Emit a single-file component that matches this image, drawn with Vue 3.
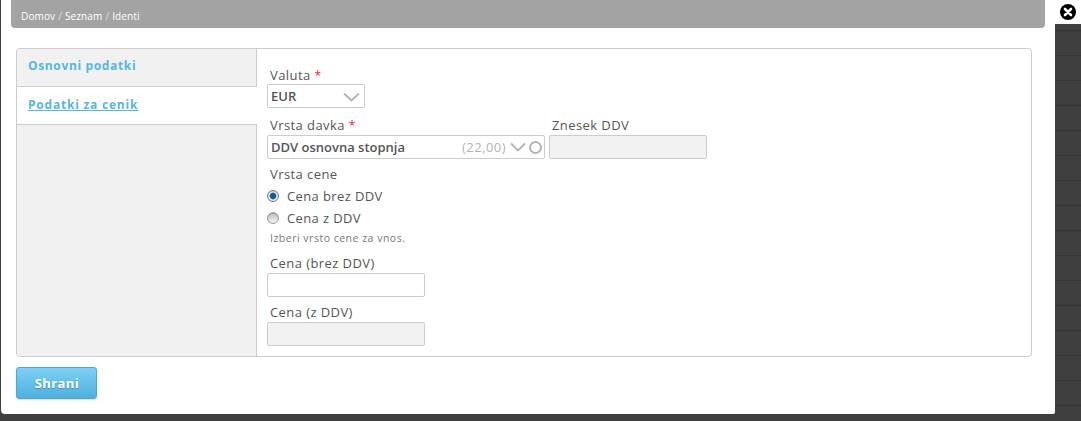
<script setup>
const breadcrumbs = ['Domov', 'Seznam', 'Identi']
const rows = [0, 1, 2, 3, 4, 5, 6, 7, 8, 9, 10, 11, 12, 13, 14, 15]
</script>

<template>
  <div class="page">
    <div class="backdrop-rows">
      <div v-for="r in rows" :key="r" class="backdrop-row"></div>
    </div>
    <div class="modal">
      <div class="crumbs">
        <template v-for="(c, i) in breadcrumbs" :key="c">
          <span v-if="i" class="crumb-sep">/</span>
          <span>{{ c }}</span>
        </template>
      </div>

      <div class="panel">
        <div class="tabs">
          <div class="tab">Osnovni podatki</div>
          <div class="tab active"><a>Podatki za cenik</a></div>
          <div class="tab-rest"></div>
        </div>

        <div class="fields">
          <label class="lbl lbl-first">Valuta <i>*</i></label>
          <div class="select select-cur">
            <b>EUR</b>
            <svg class="chev" width="17" height="10" viewBox="0 0 17 10"><path d="M1 1.5l7.5 7 7.5-7" /></svg>
          </div>

          <div class="row">
            <div>
              <label class="lbl lbl-up">Vrsta davka <i>*</i></label>
              <div class="select select-tax">
                <b>DDV osnovna stopnja</b>
                <span class="rate">(22,00)</span>
                <svg class="chev chev-tax" width="16" height="10" viewBox="0 0 16 10"><path d="M1 1.5l7 7 7-7" /></svg>
                <span class="ring"></span>
              </div>
            </div>
            <div class="amount">
              <label class="lbl lbl-up">Znesek DDV</label>
              <div class="input disabled"></div>
            </div>
          </div>

          <label class="lbl lbl-type">Vrsta cene</label>
          <div class="radio radio-first"><span class="dot on"></span>Cena brez DDV</div>
          <div class="radio"><span class="dot"></span>Cena z DDV</div>
          <div class="hint">Izberi vrsto cene za vnos.</div>

          <label class="lbl lbl-up lbl-price">Cena (brez DDV)</label>
          <div class="input"></div>
          <label class="lbl lbl-up lbl-gross">Cena (z DDV)</label>
          <div class="input disabled"></div>
        </div>
      </div>

      <button class="save">Shrani</button>
    </div>

    <div class="close">
      <svg width="16" height="16" viewBox="0 0 16 16"><path d="M5 5l6 6M11 5l-6 6" /></svg>
    </div>
  </div>
</template>

<style>
body {
  margin: 0;
  background: #3f3f3f;
}
</style>

<style scoped>
.page {
  position: relative;
  width: 1081px;
  height: 421px;
  overflow: hidden;
  background: #3f3f3f;
  font-family: "Open Sans", "DejaVu Sans", sans-serif;
  color: #555;
}

.backdrop-rows {
  position: absolute;
  top: 6px;
  left: 0;
  right: 0;
}

.backdrop-row {
  height: 24px;
  border-bottom: 1px solid #363636;
}

.modal {
  position: absolute;
  top: 0;
  left: 1px;
  width: 1054px;
  height: 414px;
  background: #fff;
  border-radius: 0 0 2px 4px;
}

.crumbs {
  display: flex;
  gap: 3px;
  align-items: center;
  height: 28px;
  margin: 0 10px;
  padding: 3px 0 0 10px;
  box-sizing: border-box;
  background: #a3a3a3;
  border-radius: 0 0 4px 4px;
  color: #fff;
  font-size: 10px;
  letter-spacing: 0.12px;
}

.crumb-sep {
  color: #ddd;
}

.panel {
  display: flex;
  width: 1016px;
  height: 309px;
  margin: 20px 0 0 15px;
  box-sizing: border-box;
  border: 1px solid #ccc;
  border-radius: 4px;
}

.tabs {
  display: flex;
  flex-direction: column;
  flex: 0 0 239px;
  border-right: 1px solid #ccc;
}

.tab {
  height: 38px;
  padding: 0 11px;
  box-sizing: border-box;
  line-height: 33px;
  background: #f1f1f1;
  border-bottom: 1px solid #ccc;
  border-radius: 4px 0 0 0;
  color: #55b7e1;
  font-size: 12px;
  font-weight: 700;
  letter-spacing: 0.65px;
}

.tab.active {
  height: 38px;
  line-height: 36px;
  background: #fff;
  margin-right: -1px;
  border-radius: 0;
  position: relative;
  letter-spacing: 0.78px;
}

.tab.active a {
  text-decoration: underline;
}

.tab-rest {
  flex: 1;
  background: #f1f1f1;
  border-radius: 0 0 0 4px;
}

.fields {
  flex: 1;
  padding: 0 0 0 10px;
}

.lbl {
  display: block;
  height: 18px;
  padding-left: 3px;
  line-height: 18px;
  font-size: 13px;
  letter-spacing: 0.42px;
}

.lbl-up {
  line-height: 16px;
}

.lbl i {
  color: #e8213d;
  font-size: 12px;
  font-style: normal;
}

.lbl-first {
  margin-top: 17px;
}

.select,
.input {
  display: flex;
  align-items: center;
  box-sizing: border-box;
  height: 24px;
  border: 1px solid #ccc;
  border-radius: 2px;
  background: #fff;
}

.select b {
  padding-left: 3px;
  font-size: 13px;
  font-weight: 600;
  color: #555;
}

.select-cur {
  width: 98px;
}

.select-cur .chev {
  margin-left: auto;
  margin-right: 4px;
  margin-top: 2px;
}

.chev path {
  fill: none;
  stroke: #b3b3b3;
  stroke-width: 1.8;
}

.row {
  display: flex;
  margin-top: 9px;
}

.select-tax {
  width: 278px;
}

.rate {
  margin-left: auto;
  color: #b3b3b3;
  font-size: 13px;
  letter-spacing: 0.45px;
}

.chev-tax {
  margin-left: 4px;
}

.ring {
  width: 9px;
  height: 9px;
  margin: 0 2px 0 3px;
  border: 2px solid #b3b3b3;
  border-radius: 50%;
}

.amount {
  margin-left: 4px;
}

.input {
  width: 158px;
}

.input.disabled {
  background: #f2f2f2;
}

.lbl-type {
  margin-top: 6px;
}

.radio {
  display: flex;
  align-items: center;
  height: 22px;
  font-size: 13px;
  letter-spacing: 0.38px;
}

.radio-first {
  margin-top: 2px;
}

.dot {
  box-sizing: border-box;
  width: 12px;
  height: 12px;
  margin-right: 8px;
  border: 1px solid #9c9c9c;
  border-radius: 50%;
  background: linear-gradient(#bdbdbd, #f4f4f4);
  box-shadow: inset 0 1px 1px rgba(0, 0, 0, 0.12);
}

.dot.on {
  background: radial-gradient(circle, #0a5f94 0 2.6px, #4f93bb 3.2px, #ececec 3.8px);
  border-color: #777;
}

.hint {
  padding-left: 3px;
  margin-top: 1px;
  font-size: 10.5px;
  line-height: 16px;
  letter-spacing: 0.5px;
  color: #777;
}

.lbl-price {
  margin-top: 9px;
}

.lbl-gross {
  margin-top: 7px;
}

.save {
  display: block;
  width: 81px;
  height: 32px;
  margin: 10px 0 0 15px;
  padding: 0 0 0 1px;
  border: 1px solid #48a9d3;
  border-radius: 3px;
  background: linear-gradient(#7dd0f5, #4fb0de);
  box-shadow: 0 1px 2px rgba(0, 0, 0, 0.15);
  color: #fff;
  font-family: inherit;
  font-size: 13px;
  font-weight: 700;
  letter-spacing: 0.4px;
  text-shadow: 0 1px 1px rgba(0, 0, 0, 0.25);
}

.close {
  position: absolute;
  top: 0;
  left: 1055px;
  width: 26px;
  height: 24px;
  background: #fff;
}

.close svg {
  position: absolute;
  top: 4px;
  left: 5px;
  background: #000;
  border-radius: 50%;
}

.close path {
  fill: none;
  stroke: #fff;
  stroke-width: 2.6;
  stroke-linecap: round;
}
</style>
